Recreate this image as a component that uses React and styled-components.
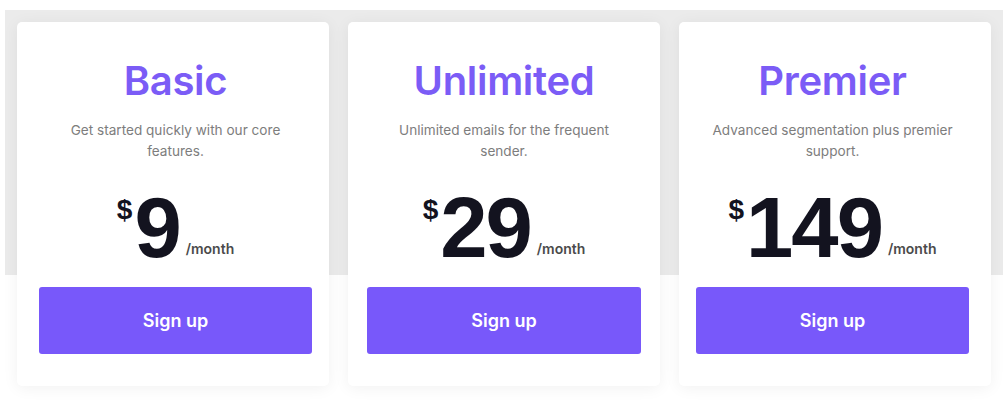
import styled, { createGlobalStyle } from 'styled-components'

const GlobalStyle = createGlobalStyle`
    body{
        margin: 0;
        background: #ffffff;
        font-family: Inter, "Noto Sans", sans-serif;
    }
`;

const plans = [
    {name: 'Basic', text: 'Get started quickly with our core features.', price: 9, pad: [22, 17]},
    {name: 'Unlimited', text: 'Unlimited emails for the frequent sender.', price: 29, pad: [19, 19]},
    {name: 'Premier', text: 'Advanced segmentation plus premier support.', price: 149, pad: [17, 22]},
]

const App = () => {
    return(
        <>
            <GlobalStyle />
            <Pricing>
                {plans.map(plan => (
                    <Card key={plan.name} $left={plan.pad[0]} $right={plan.pad[1]}>
                        <h2>{plan.name}</h2>
                        <p>{plan.text}</p>
                        <Price>
                            <span className="currency">$</span>
                            <span className="amount">{plan.price}</span>
                            <span className="period">/month</span>
                        </Price>
                        <SignUp>Sign up</SignUp>
                    </Card>
                ))}
            </Pricing>
        </>
    )
}

const Pricing = styled.section`
    margin: 10px 5px 0px;
    padding: 12px 12px 14px;
    display: grid;
    grid-template-columns: repeat(3, 312px);
    gap: 19px;
    background: linear-gradient(#ebebeb 0px, #ebebeb 265px, transparent 265px);
`;

const Card = styled.div`
    background: #ffffff;
    border-radius: 5px;
    box-shadow: 0px 2px 16px rgba(0, 0, 0, 0.06);
    padding: 35px ${p => p.$right}px 32px ${p => p.$left}px;
    display: flex;
    flex-direction: column;
    align-items: center;
    text-align: center;
    h2{
        margin: 0;
        font-size: 40px;
        line-height: 48px;
        font-weight: 600;
        letter-spacing: -0.3px;
        color: #7b5cf6;
    }
    p{
        margin: 15px 0px 0px;
        width: 252px;
        font-size: 13.6px;
        line-height: 21px;
        color: #7d7d7d;
    }
`;

const Price = styled.div`
    margin-top: 23px;
    line-height: 1;
    color: #13131f;
    font-family: "Liberation Sans", Arial, sans-serif;
    font-weight: bold;
    .currency{
        display: inline-block;
        vertical-align: top;
        padding-top: 11px;
        font-size: 28px;
        margin-right: 2px;
    }
    .amount{
        font-size: 85px;
        letter-spacing: -2px;
    }
    .period{
        margin-left: 6px;
        font-family: Inter, sans-serif;
        font-size: 14px;
        font-weight: 600;
        color: #4b4b4b;
        vertical-align: 3px;
    }
`;

const SignUp = styled.button`
    margin-top: 17px;
    width: 100%;
    height: 67px;
    border: none;
    border-radius: 3px;
    background: #7858fa;
    color: #ffffff;
    font-family: Inter, sans-serif;
    font-size: 18px;
    font-weight: 600;
    cursor: pointer;
`;

export default App;
